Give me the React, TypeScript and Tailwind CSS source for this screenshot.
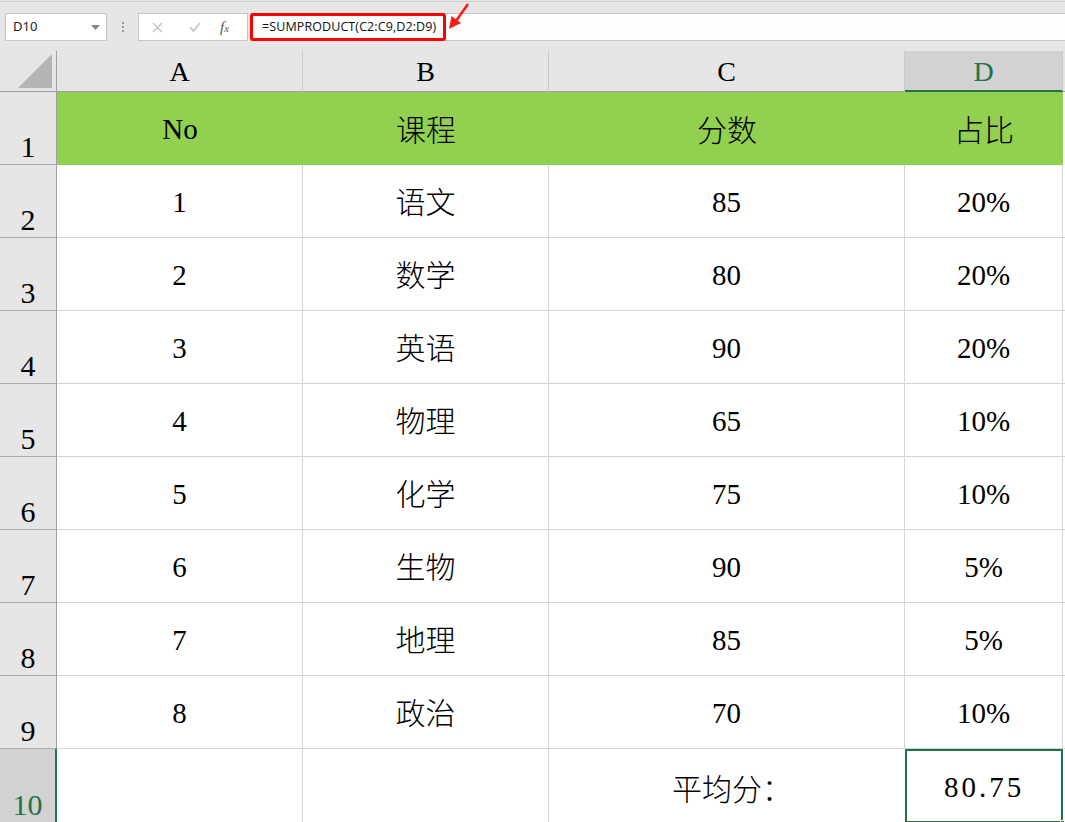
import React from "react";

const serif = { fontFamily: '"Liberation Serif", "Noto Sans CJK SC", serif' };
const cjk = { fontFamily: '"Liberation Serif", "Noto Sans CJK SC", serif', fontWeight: 300 };
const cjkOnly = { fontFamily: '"Noto Sans CJK SC", serif', fontWeight: 300 };

const rows: [string, string, string, string][] = [
  ["1", "语文", "85", "20%"],
  ["2", "数学", "80", "20%"],
  ["3", "英语", "90", "20%"],
  ["4", "物理", "65", "10%"],
  ["5", "化学", "75", "10%"],
  ["6", "生物", "90", "5%"],
  ["7", "地理", "85", "5%"],
  ["8", "政治", "70", "10%"],
];

const widths = ["w-[246px]", "w-[246px]", "w-[356px]", "w-[158px]"];

function RowHeader({ n, selected }: { n: number; selected?: boolean }) {
  return (
    <div
      className={`w-[57px] h-full shrink-0 flex items-end justify-center pb-[2px] text-[30px] leading-none border-b border-[#ababab] ${
        selected
          ? "bg-[#d2d2d2] text-[#217346] border-r-2 border-r-[#217346]"
          : "bg-[#e6e6e6] text-black border-r border-r-[#9f9f9f]"
      }`}
      style={serif}
    >
      {n}
    </div>
  );
}

export default function App() {
  return (
    <div className="w-[1065px] h-[822px] overflow-hidden bg-[#e6e6e6] relative select-none">
      {/* formula bar */}
      <div className="h-[50px] border-t border-[#d0d0d0] mt-px flex items-start pt-[11px] relative">
        <div
          className="ml-[5px] w-[102px] h-[28px] bg-white border border-[#c6c6c6] flex items-center justify-between pl-[7px] pr-[6px] text-[13px] text-[#222]"
          style={{ fontFamily: '"Noto Sans", sans-serif' }}
        >
          <span>D10</span>
          <svg width="9" height="5" viewBox="0 0 9 5">
            <path d="M0 0h9L4.5 5z" fill="#888" />
          </svg>
        </div>
        <div className="w-[31px] h-[28px] flex flex-col items-center justify-center gap-[2px]">
          <span className="w-[2px] h-[2px] bg-[#999]" />
          <span className="w-[2px] h-[2px] bg-[#999]" />
          <span className="w-[2px] h-[2px] bg-[#999]" />
        </div>
        <div className="w-[110px] h-[28px] bg-white border border-[#c6c6c6] flex items-center">
          <svg className="ml-[13px]" width="11" height="11" viewBox="0 0 11 11">
            <path d="M1 1l9 9M10 1l-9 9" stroke="#c2c2c2" strokeWidth="1.4" />
          </svg>
          <svg className="ml-[26px]" width="12" height="10" viewBox="0 0 12 10">
            <path d="M1 5l3.5 4L11 1" stroke="#c2c2c2" strokeWidth="1.6" fill="none" />
          </svg>
          <span
            className="ml-[19px] text-[15px] italic text-[#555] leading-none"
            style={{ fontFamily: '"Liberation Serif", serif' }}
          >
            f<span className="text-[11px]">x</span>
          </span>
        </div>
        <div className="ml-[2px] flex-1 h-[28px] bg-[#fdfdfd] border-y border-[#c6c6c6] flex items-center relative">
          <div className="absolute left-0 top-[-1px] w-[196px] h-[28px] border-[3px] border-[#ff0000] rounded-[3px]" />
          <span
            className="ml-[12px] text-[12.5px] text-[#111] tracking-[0.1px]"
            style={{ fontFamily: '"Open Sans", "Noto Sans", sans-serif' }}
          >
            =SUMPRODUCT(C2:C9,D2:D9)
          </span>
        </div>
        <svg className="absolute left-[446px] top-0" width="26" height="30" viewBox="0 0 26 30">
          <path d="M22 2L10 19" stroke="#ff1a1a" strokeWidth="2.6" />
          <path d="M3 27L5.5 14L15 21z" fill="#ff1a1a" />
        </svg>
      </div>

      {/* column header */}
      <div className="h-[41px] flex">
        <div className="w-[57px] shrink-0 border-r border-[#9f9f9f] border-b border-b-[#9f9f9f] flex items-end justify-end pr-[4px] pb-[3px]">
          <svg width="34" height="34" viewBox="0 0 34 34">
            <path d="M34 0V34H0z" fill="#b4b4b4" />
          </svg>
        </div>
        {["A", "B", "C", "D"].map((c, i) => (
          <div
            key={c}
            className={`${widths[i]} shrink-0 flex items-center justify-center text-[28px] leading-none border-r border-[#c8c8c8] ${
              c === "D"
                ? "bg-[#d2d2d2] text-[#217346] border-b-2 border-b-[#217346]"
                : "text-black border-b border-b-[#9f9f9f]"
            }`}
            style={serif}
          >
            <span className="pt-[2px]">{c}</span>
          </div>
        ))}
        <div className="flex-1 border-b border-[#9f9f9f]" />
      </div>

      {/* row 1 */}
      <div className="h-[73px] flex">
        <RowHeader n={1} />
        {["No", "课程", "分数", "占比"].map((t, i) => (
          <div
            key={t}
            className={`${widths[i]} shrink-0 bg-[#92d050] flex items-center justify-center pt-[3px] text-black ${
              i === 0 ? "text-[29px]" : "text-[30px]"
            }`}
            style={i === 0 ? serif : cjk}
          >
            {t}
          </div>
        ))}
        <div className="flex-1 bg-white" />
      </div>

      {rows.map((r, ri) => (
        <div key={ri} className="h-[73px] flex">
          <RowHeader n={ri + 2} />
          {r.map((t, i) => (
            <div
              key={i}
              className={`${widths[i]} shrink-0 bg-white border-r border-b border-[#d4d4d4] flex items-center justify-center pt-[3px] text-black ${
                i === 1 ? "text-[30px]" : "text-[29px]"
              }`}
              style={i === 1 ? cjk : serif}
            >
              {t}
            </div>
          ))}
          <div className="flex-1 bg-white border-b border-[#d4d4d4]" />
        </div>
      ))}

      {/* row 10 */}
      <div className="h-[74px] flex">
        <RowHeader n={10} selected />
        <div className={`${widths[0]} shrink-0 bg-white border-r border-b border-[#d4d4d4]`} />
        <div className={`${widths[1]} shrink-0 bg-white border-r border-b border-[#d4d4d4]`} />
        <div
          className={`${widths[2]} shrink-0 bg-white border-b border-[#d4d4d4] flex items-center justify-center pt-[3px] pl-[10px] text-[30px] text-black`}
          style={cjkOnly}
        >
          平均分：
        </div>
        <div
          className={`${widths[3]} shrink-0 bg-white border-2 border-[#217346] flex items-center justify-center pt-[3px] text-[29px] text-black relative tracking-[3px]`}
          style={serif}
        >
          80.75
          <span className="absolute right-[-4px] bottom-[-4px] w-[5px] h-[5px] bg-[#217346] border border-white" />
        </div>
        <div className="flex-1 bg-white" />
      </div>
    </div>
  );
}
